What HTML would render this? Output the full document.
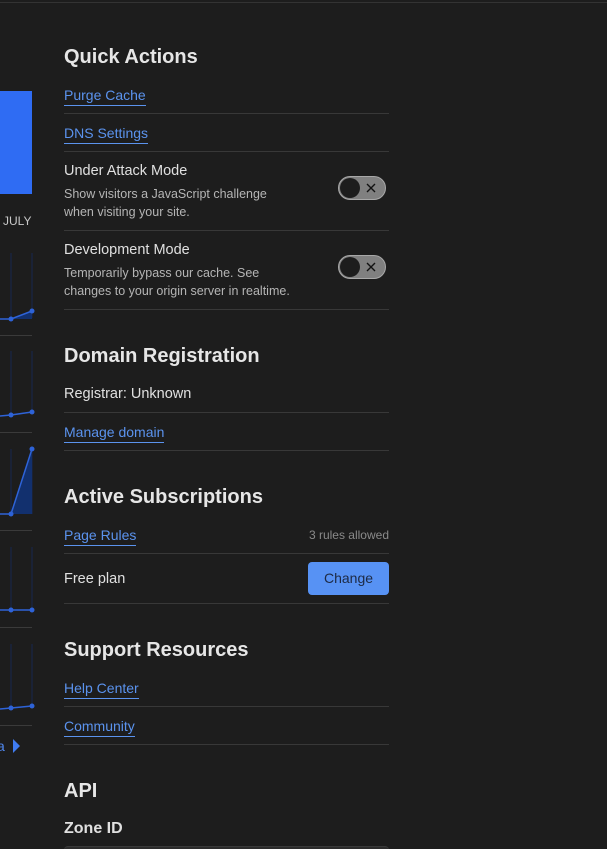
<!DOCTYPE html>
<html style="overflow:hidden;height:849px"><head><meta charset="utf-8"><style>
body{margin:0;width:607px;height:849px;background:#1d1d1d;overflow:hidden;font-family:"Liberation Sans",sans-serif;position:relative}
.a{position:absolute;white-space:nowrap}
h2{position:absolute;margin:0;left:64px;font-size:20px;font-weight:600;color:#e6e6e6;white-space:nowrap}
.lk{position:absolute;left:64px;font-size:14px;color:#5b93ee;border-bottom:1px solid #5b93ee;line-height:17px;padding-bottom:1px}
.t{position:absolute;left:64px;font-size:14.5px;color:#e0e0e0}
.s{position:absolute;left:64px;font-size:12.5px;color:#b5b5b5;line-height:18px}
.hr{position:absolute;left:64px;width:325px;height:1px;background:#383838}
.tg{position:absolute;left:338px;width:46px;height:22px;border:1px solid #a8a8a8;border-radius:12px;background:#808080}
.tg .k{position:absolute;left:1px;top:1px;width:20px;height:20px;border-radius:50%;background:#1d1d1d}
</style></head><body>
<div style="position:absolute;left:0;top:2px;width:607px;height:1px;background:#333"></div>
<svg class="a" style="left:0;top:0" width="60" height="849">
<rect x="0" y="91" width="32" height="103" fill="#2f6cf3"/>
<text x="3" y="225" font-size="12" fill="#c8c8c8" font-family="Liberation Sans">JULY</text>
<g stroke="#16284f" stroke-width="1">
<line x1="11" y1="253" x2="11" y2="318"/><line x1="32" y1="253" x2="32" y2="318"/>
<line x1="11" y1="351" x2="11" y2="415"/><line x1="32" y1="351" x2="32" y2="412"/>
<line x1="11" y1="449" x2="11" y2="514"/><line x1="32" y1="449" x2="32" y2="514"/>
<line x1="11" y1="547" x2="11" y2="610"/><line x1="32" y1="547" x2="32" y2="610"/>
<line x1="11" y1="644" x2="11" y2="708"/><line x1="32" y1="644" x2="32" y2="706"/>
</g>
<g fill="#3a3a3a"><rect x="0" y="335" width="32" height="1"/><rect x="0" y="432" width="32" height="1"/><rect x="0" y="530" width="32" height="1"/><rect x="0" y="627" width="32" height="1"/><rect x="0" y="725" width="32" height="1"/></g>
<polygon points="11,319 32,311 32,319" fill="#12306e"/>
<polygon points="11,514 32,449 32,514" fill="#12306e"/>
<g stroke="#2e63d8" stroke-width="1.5" fill="none">
<polyline points="0,319 11,319 32,311"/><polyline points="0,416 11,415 32,412"/><polyline points="0,514 11,514 32,449"/><polyline points="0,610 11,610 32,610"/><polyline points="0,709 11,708 32,706"/>
</g>
<g fill="#2e63d8"><circle cx="11" cy="319" r="2.5"/><circle cx="32" cy="311" r="2.5"/><circle cx="11" cy="415" r="2.5"/><circle cx="32" cy="412" r="2.5"/><circle cx="11" cy="514" r="2.5"/><circle cx="32" cy="449" r="2.5"/><circle cx="11" cy="610" r="2.5"/><circle cx="32" cy="610" r="2.5"/><circle cx="11" cy="708" r="2.5"/><circle cx="32" cy="706" r="2.5"/></g>
<text x="-3" y="751" font-size="14" fill="#4f86ec" font-family="Liberation Sans">a</text>
<polygon points="13,739 13,753 20,746" fill="#3f7bf0"/>
</svg>

<h2 style="top:46px">Quick Actions</h2>
<div class="lk" style="top:87px">Purge Cache</div>
<div class="hr" style="top:113px"></div>
<div class="lk" style="top:125px">DNS Settings</div>
<div class="hr" style="top:151px"></div>
<div class="t" style="top:163px">Under Attack Mode</div>
<div class="s" style="top:185px">Show visitors a JavaScript challenge<br>when visiting your site.</div>
<div class="tg" style="top:176px"><div class="k"></div><svg class="a" style="left:27px;top:6px" width="10" height="10"><path d="M1 1L9 9M9 1L1 9" stroke="#111" stroke-width="1.4"/></svg></div>
<div class="hr" style="top:230px"></div>
<div class="t" style="top:242px">Development Mode</div>
<div class="s" style="top:264px">Temporarily bypass our cache. See<br>changes to your origin server in realtime.</div>
<div class="tg" style="top:255px"><div class="k"></div><svg class="a" style="left:27px;top:6px" width="10" height="10"><path d="M1 1L9 9M9 1L1 9" stroke="#111" stroke-width="1.4"/></svg></div>
<div class="hr" style="top:309px"></div>

<h2 style="top:345px">Domain Registration</h2>
<div class="t" style="top:386px">Registrar: Unknown</div>
<div class="hr" style="top:412px"></div>
<div class="lk" style="top:424px">Manage domain</div>
<div class="hr" style="top:450px"></div>

<h2 style="top:486px">Active Subscriptions</h2>
<div class="lk" style="top:527px">Page Rules</div>
<div class="a" style="right:218px;top:528px;font-size:12px;color:#8a8a8a">3 rules allowed</div>
<div class="hr" style="top:553px"></div>
<div class="t" style="top:571px">Free plan</div>
<div class="a" style="left:308px;top:562px;width:81px;height:33px;border-radius:4px;background:#5792f4;color:#1d2a44;font-size:14px;text-align:center;line-height:33px">Change</div>
<div class="hr" style="top:603px"></div>

<h2 style="top:639px">Support Resources</h2>
<div class="lk" style="top:680px">Help Center</div>
<div class="hr" style="top:706px"></div>
<div class="lk" style="top:718px">Community</div>
<div class="hr" style="top:744px"></div>

<h2 style="top:780px">API</h2>
<div class="a" style="left:64px;top:820px;font-size:16px;font-weight:600;color:#e0e0e0">Zone ID</div>
<div class="a" style="left:64px;top:846px;width:325px;height:3px;border-radius:4px 4px 0 0;background:#2c2c2c;border-top:1px solid #3a3a3a"></div>
</body></html>
